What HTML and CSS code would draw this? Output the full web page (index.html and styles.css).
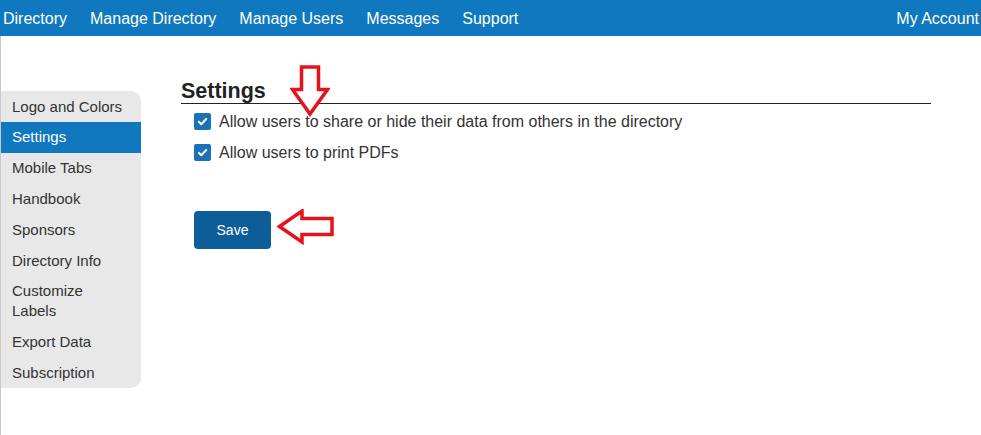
FILE: index.html
```html
<!DOCTYPE html>
<html>
<head>
<meta charset="utf-8">
<link rel="stylesheet" href="styles.css">
</head>
<body>
<nav class="topnav">
  <div class="nav-left">
    <a class="nav-item">Directory</a>
    <a class="nav-item">Manage Directory</a>
    <a class="nav-item">Manage Users</a>
    <a class="nav-item">Messages</a>
    <a class="nav-item">Support</a>
  </div>
  <a class="nav-item account">My Account</a>
</nav>
<div class="layout">
  <aside class="sidebar">
    <div class="side-item">Logo and Colors</div>
    <div class="side-item active">Settings</div>
    <div class="side-item">Mobile Tabs</div>
    <div class="side-item">Handbook</div>
    <div class="side-item">Sponsors</div>
    <div class="side-item">Directory Info</div>
    <div class="side-item">Customize<br>Labels</div>
    <div class="side-item">Export Data</div>
    <div class="side-item">Subscription</div>
  </aside>
  <main class="main">
    <h2 class="title">Settings</h2>
    <div class="option">
      <span class="checkbox"><svg viewBox="0 0 17 17" width="17" height="17"><path d="M4.8 8.8 L7.3 11.2 L12.2 6" fill="none" stroke="#fff" stroke-width="2" stroke-linecap="round" stroke-linejoin="round"/></svg></span>
      <span>Allow users to share or hide their data from others in the directory</span>
    </div>
    <div class="option">
      <span class="checkbox"><svg viewBox="0 0 17 17" width="17" height="17"><path d="M4.8 8.8 L7.3 11.2 L12.2 6" fill="none" stroke="#fff" stroke-width="2" stroke-linecap="round" stroke-linejoin="round"/></svg></span>
      <span>Allow users to print PDFs</span>
    </div>
    <button class="save">Save</button>
    <svg class="arrow arrow-down" width="40" height="52" viewBox="0 0 40 52"><path d="M11.5 2 H28.5 V24.5 H37.5 L20 49 L2.5 24.5 H11.5 Z" fill="#fff" stroke="#e3141b" stroke-width="3.5" stroke-linejoin="miter"/></svg>
    <svg class="arrow arrow-left" width="58" height="36" viewBox="0 0 58 36"><path d="M2.5 17.5 L25 2 V9.5 H55 V25.5 H25 V33 Z" fill="#fff" stroke="#e3141b" stroke-width="3.5" stroke-linejoin="miter"/></svg>
  </main>
</div>
</body>
</html>
```
FILE: styles.css
```css
html, body {
  margin: 0;
  padding: 0;
  background: #fff;
  font-family: "Liberation Sans", Arial, sans-serif;
}

.topnav {
  height: 36px;
  box-sizing: border-box;
  background: #0f78be;
  display: flex;
  align-items: center;
  justify-content: space-between;
  padding: 2px 2px 0 3px;
}

.nav-left {
  display: flex;
  gap: 23px;
}

.nav-item {
  color: #fff;
  font-size: 16px;
  line-height: 20px;
  text-decoration: none;
}

.layout {
  display: flex;
  align-items: flex-start;
  border-left: 1px solid #c8c8c8;
  min-height: 399px;
}

.sidebar {
  width: 140px;
  margin-top: 55px;
  background: #e8e8e8;
  border-radius: 0 10px 10px 0;
}

.side-item {
  font-size: 15px;
  line-height: 20px;
  padding: 5.6px 11px 5.2px;
  color: #333;
}

.side-item.active {
  background: #0f78be;
  color: #fff;
}

.main {
  position: relative;
  margin-left: 40px;
  padding-top: 43px;
  width: 750px;
}

.title {
  margin: 0;
  font-size: 21.5px;
  line-height: 24px;
  font-weight: bold;
  color: #222;
  border-bottom: 1px solid #222;
}

.option {
  display: flex;
  align-items: center;
  gap: 8px;
  height: 31px;
  padding-left: 13px;
  font-size: 16px;
  color: #333;
}

.option:first-of-type {
  margin-top: 2px;
}

.checkbox {
  width: 17px;
  height: 17px;
  background: #1a72b6;
  border-radius: 2px;
  display: inline-flex;
  flex: none;
}

.save {
  display: block;
  margin: 43px 0 0 13px;
  width: 77px;
  height: 38px;
  border: none;
  border-radius: 4px;
  background: #0d5d98;
  color: #fff;
  font-family: "Liberation Sans", Arial, sans-serif;
  font-size: 14px;
}

.arrow {
  position: absolute;
}

.arrow-down {
  left: 109px;
  top: 29px;
}

.arrow-left {
  left: 96px;
  top: 173px;
}
```
